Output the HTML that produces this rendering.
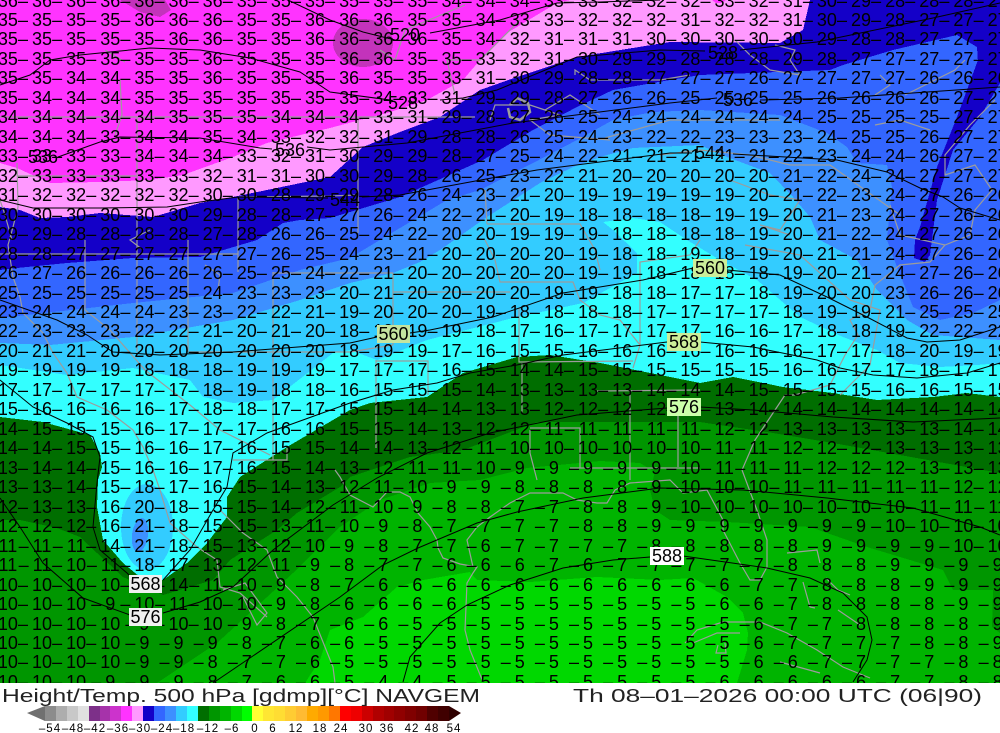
<!DOCTYPE html>
<html><head><meta charset="utf-8"><title>Height/Temp. 500 hPa NAVGEM</title>
<style>
html,body{margin:0;padding:0;background:#fff}
#w{position:relative;width:1000px;height:733px;overflow:hidden;font-family:"Liberation Sans",sans-serif;color:#000}
#m{position:absolute;left:0;top:0;width:1000px;height:683px;overflow:hidden}
svg{position:absolute;left:0;top:0}
table{position:absolute;left:-16.2px;top:-8.5px;border-collapse:separate;border-spacing:0;table-layout:fixed;width:1024px;font-size:18px;word-spacing:-1px}
td{padding:0;width:34.13px;height:19.47px;line-height:19.47px;text-align:center;white-space:nowrap}
tr{height:19.47px}
</style></head><body><div id="w"><div id="m">
<svg width="1000" height="683" viewBox="0 0 1000 683" shape-rendering="crispEdges">
<rect width="1000" height="683" fill="#ff33ff"/>
<polygon fill="#c333bb" points="120,0 165,0 171,10 160,17 140,12"/>
<ellipse fill="#c333bb" cx="363" cy="43" rx="30" ry="24"/>
<polygon fill="#ff99ff" points="0,163 17,168 50,183 100,182 150,180 183,175 233,157 267,143 330,128 360,120 387,113 427,100 463,80 480,60 507,33 557,3 570,0 1000,0 1000,683 0,683"/>
<polygon fill="#ff33ff" points="712,0 726,0 722,3 716,3"/>
<polygon fill="#1400c8" points="0,207 20,210 40,218 67,217 100,213 153,217 200,203 233,197 330,177 363,147 400,132 440,117 480,90 517,77 577,57 670,42 780,43 803,30 810,0 1000,0 1000,683 0,683"/>
<polygon fill="#3366ff" points="0,270 17,268 67,263 133,258 200,257 257,240 283,223 300,220 330,218 400,197 483,160 533,130 577,107 613,90 670,80 700,75 830,70 843,65 893,50 957,35 977,47 978,63 1000,83 1000,683 0,683"/>
<polygon fill="#1400c8" points="978,60 1000,60 1000,83 980,117 953,150 937,200 930,255 925,262 914,258 915,240 920,227 937,167 957,117"/>
<polygon fill="#3d90ff" points="0,318 133,303 233,293 300,270 350,258 400,228 447,200 480,190 533,163 577,140 613,120 653,112 700,110 780,115 827,133 847,147 857,163 887,165 892,187 887,240 897,267 913,307 940,320 973,313 1000,300 1000,683 0,683"/>
<polygon fill="#33ccff" points="0,343 50,345 133,337 233,320 300,300 350,283 393,273 420,262 440,250 487,217 540,183 573,167 600,157 633,148 700,145 727,157 770,173 793,197 810,217 820,240 857,260 877,290 907,320 933,335 1000,340 1000,683 0,683"/>
<polygon fill="#33ffff" points="0,365 67,375 133,368 190,380 203,397 233,403 273,400 333,353 350,350 377,360 427,340 513,318 583,303 637,273 637,253 613,230 603,222 633,218 660,222 687,240 720,260 757,280 800,317 843,337 877,350 900,363 940,367 977,365 1000,363 1000,683 0,683"/>
<ellipse fill="#33ccff" cx="147" cy="527" rx="26" ry="43"/>
<ellipse fill="#3d90ff" cx="140" cy="535" rx="8" ry="17" transform="rotate(8 140 535)"/>
<path fill="#006e00" fill-rule="evenodd" d="M0,417 43,422 90,435 100,453 102,467 98,480 97,507 103,540 123,563 140,577 163,580 187,563 207,543 227,517 227,497 240,477 287,447 350,410 370,403 427,397 463,373 517,357 550,355 600,363 700,383 733,377 783,387 833,393 877,400 933,397 967,393 1000,397 1000,683 0,683Z"/>
<polygon fill="#009600" points="0,520 20,520 57,528 80,537 97,553 123,577 163,595 213,580 230,560 277,530 297,513 340,487 350,477 410,457 463,450 537,422 700,422 733,427 773,433 833,443 1000,473 1000,683 0,683"/>
<polygon fill="#00b400" points="157,683 217,643 253,610 293,573 340,527 380,500 430,483 480,480 527,468 600,461 640,463 655,472 650,490 655,510 670,520 727,522 810,527 867,547 943,570 953,590 993,590 992,627 1000,633 1000,683"/>
<polygon fill="#00d800" points="305,683 320,660 330,630 363,617 397,587 423,580 470,572 477,580 530,582 597,577 660,580 693,578 727,597 743,613 748,633 747,650 737,683"/>
<g fill="none" stroke="#9c9c9c" stroke-width="1.2" shape-rendering="auto">
<polyline points="17,163 18,207 13,227 8,245 13,277 20,297 23,313 43,333 53,353 67,373 77,397 107,410 133,430 143,447 153,470 160,490 170,523 197,547 217,560 220,587 240,593 267,617"/>
<polyline points="220,510 243,533 267,550 277,577 297,597 313,617 333,667 335,683"/>
<polyline points="223,590 245,583 267,613 257,625 243,597"/>
<polyline points="0,117 475,117"/><polyline points="137,117 137,176 17,176"/>
<polyline points="137,176 137,240 137,352"/><polyline points="358,117 358,233"/><polyline points="238,197 330,196 358,195"/><polyline points="238,197 238,272"/>
<polyline points="85,240 85,310"/><polyline points="0,254 238,254"/><polyline points="188,240 188,352"/><polyline points="273,272 273,460"/><polyline points="273,273 393,273"/>
<polyline points="190,352 350,352 393,345"/><polyline points="233,460 287,460 287,448"/>
<polyline points="393,273 393,345 393,292 510,292"/><polyline points="519,308 519,362 633,361"/><polyline points="376,360 376,448"/><polyline points="376,361 428,361 428,395"/>
<polyline points="597,391 700,390"/><polyline points="630,393 630,480"/><polyline points="678,413 678,467"/><polyline points="530,428 580,428 580,468"/><polyline points="530,430 530,453 537,480"/><polyline points="522,363 522,413"/><polyline points="570,468 700,468"/>
<polyline points="85,310 110,330 145,370 190,405 220,430 270,455"/>
<polyline points="487,224 580,224 595,250 600,270"/><polyline points="485,190 487,224"/>
<polyline points="485,240 495,260 500,282 573,282 580,300 600,315 620,320 640,345 633,368"/>
<polyline points="700,240 690,255 640,262 640,345"/>
<polyline points="150,230 130,240 143,250"/><polyline points="205,265 220,275 218,290"/>
<polyline points="335,470 340,477 350,495 373,507 387,492 400,492 410,497 418,513 430,527 437,540 438,548 443,558 460,564 477,567 473,573 467,583 465,630 470,650 483,682"/>
<polyline points="473,567 467,540 477,527 490,517 510,503 530,493 563,493 577,500 597,503 607,503 615,490 630,483 670,480 683,493 707,490 723,520 723,530 740,563 750,580 760,580 767,567 767,540 758,513 742,470"/>
<polyline points="742,470 755,440 785,395 795,395 830,385 845,355 858,335 850,320 870,310 875,285 900,265 930,262 945,245"/>
<polyline points="685,643 697,630 723,622 760,622 787,633 817,650 843,667 870,678"/>
<polyline points="693,643 717,633 740,633"/><polyline points="718,645 716,653 726,653 725,643"/><polyline points="780,662 820,673"/>
<polyline points="787,553 817,550 820,563"/><polyline points="803,582 810,607 815,608"/><polyline points="826,578 838,590 850,595"/><polyline points="838,610 860,625"/>
<polyline points="520,20 480,60 447,60 455,95"/><polyline points="380,50 395,60 405,30 465,5"/><polyline points="490,120 495,105 530,105 560,115 530,120 550,135 610,140"/>
<polyline points="575,75 575,70 590,80 660,80 690,75"/><polyline points="545,110 570,95 600,115"/><polyline points="605,138 670,120 720,120 780,120"/>
<polyline points="660,155 700,150 750,155 790,165 830,165 900,215"/><polyline points="730,180 770,195 800,200 790,215 780,230 760,225 790,235"/>
<polyline points="735,40 750,55 770,70 800,75 790,60 795,50 775,45"/><polyline points="880,75 890,85 875,95"/><polyline points="875,125 900,120 930,130"/>
<polyline points="905,95 955,70 965,60"/><polyline points="995,100 970,125 945,155 945,175 975,165 992,190 975,210 970,235 945,245 900,235 890,205"/>
<polyline points="745,245 800,255 850,300 880,310 870,365 840,395"/>
<polyline points="0,200 5,215 12,240"/><polyline points="120,80 122,115 115,135"/><polyline points="105,50 125,62"/>
<polyline points="510,105 517,98 528,103 530,112 520,120 510,117 508,108" stroke-width="2.5"/>
</g>
<g fill="none" stroke="#000" stroke-width="1" shape-rendering="auto">
<polyline points="288,0 330,20 363,32 395,40"/><polyline points="430,33 500,20 557,3 600,2 660,0"/>
<polyline points="0,85 30,75 50,60 80,55 110,52 150,48 200,50 250,58 300,72 330,92 390,100"/><polyline points="440,100 463,98 497,90 577,57 660,50 705,51"/><polyline points="740,50 817,42 933,18 1000,3"/>
<polyline points="58,157 100,142 120,137 200,138 260,148 272,149"/><polyline points="307,147 330,150 363,147 407,143 513,123 670,103 717,98"/><polyline points="760,100 840,98 1000,87"/>
<polyline points="0,200 33,208 100,208 167,207 200,202 238,197 328,198"/><polyline points="362,197 400,195 497,177 537,170 670,153 692,153"/><polyline points="733,154 837,160 887,172 920,188 943,197 960,208 1000,220"/>
<polyline points="0,300 20,307 57,320 87,335 113,352 160,355 233,352 350,343 377,337"/><polyline points="410,333 430,330 493,317 563,293 643,280 693,268"/><polyline points="727,270 780,275 827,297 867,317 907,338 927,342 960,340 1000,327"/>
<polyline points="0,380 33,407 67,423 93,437 100,457 97,483 93,527 100,550 127,573 130,576"/><polyline points="163,580 190,550 213,510 227,487 233,453 267,433 350,403 393,390 437,383 470,373 517,365 563,355 667,342"/><polyline points="700,342 753,347 817,360 840,368 873,375 917,378 967,373 1000,363"/>
<polyline points="0,498 20,527 43,563 83,598 130,615"/><polyline points="163,613 200,602 233,587 273,550 333,505 377,478 427,453 490,433 577,415 667,408"/><polyline points="700,407 753,410 833,417 913,422 1000,418"/>
<polyline points="403,682 410,657 440,623 467,605 510,585 563,568 613,560 650,557"/><polyline points="683,556 767,568 810,578 843,593 867,617 872,640 867,660 853,682"/>
<polyline points="213,683 340,597 383,565 418,548 477,523 517,512 583,498 660,488 743,490 827,498 913,508 980,527 1000,535"/>
</g>
</svg>
<table>
<tr><td>– 36<td>– 36<td>– 36<td>– 36<td>– 36<td>– 36<td>– 36<td>– 35<td>– 35<td>– 35<td>– 35<td>– 35<td>– 35<td>– 34<td>– 34<td>– 34<td>– 33<td>– 33<td>– 32<td>– 32<td>– 32<td>– 33<td>– 32<td>– 31<td>– 30<td>– 29<td>– 28<td>– 28<td>– 28<td>– 27
<tr><td>– 35<td>– 35<td>– 35<td>– 35<td>– 36<td>– 36<td>– 36<td>– 35<td>– 35<td>– 36<td>– 36<td>– 36<td>– 35<td>– 35<td>– 34<td>– 33<td>– 33<td>– 32<td>– 32<td>– 32<td>– 31<td>– 32<td>– 32<td>– 31<td>– 30<td>– 29<td>– 28<td>– 27<td>– 27<td>– 27
<tr><td>– 35<td>– 35<td>– 35<td>– 35<td>– 35<td>– 36<td>– 36<td>– 35<td>– 35<td>– 36<td>– 36<td>– 36<td>– 36<td>– 35<td>– 34<td>– 32<td>– 31<td>– 31<td>– 31<td>– 30<td>– 30<td>– 30<td>– 30<td>– 30<td>– 29<td>– 28<td>– 28<td>– 27<td>– 27<td>– 27
<tr><td>– 35<td>– 35<td>– 35<td>– 35<td>– 35<td>– 35<td>– 36<td>– 35<td>– 35<td>– 35<td>– 36<td>– 36<td>– 35<td>– 35<td>– 33<td>– 32<td>– 31<td>– 30<td>– 29<td>– 29<td>– 28<td>– 28<td>– 28<td>– 29<td>– 28<td>– 27<td>– 27<td>– 27<td>– 27<td>– 27
<tr><td>– 35<td>– 35<td>– 34<td>– 34<td>– 35<td>– 35<td>– 36<td>– 35<td>– 35<td>– 35<td>– 36<td>– 35<td>– 35<td>– 33<td>– 31<td>– 30<td>– 29<td>– 28<td>– 28<td>– 27<td>– 27<td>– 27<td>– 26<td>– 27<td>– 27<td>– 27<td>– 27<td>– 26<td>– 26<td>– 26
<tr><td>– 35<td>– 34<td>– 34<td>– 34<td>– 35<td>– 35<td>– 35<td>– 35<td>– 35<td>– 35<td>– 35<td>– 34<td>– 33<td>– 31<td>– 29<td>– 29<td>– 28<td>– 27<td>– 26<td>– 26<td>– 25<td>– 25<td>– 25<td>– 25<td>– 26<td>– 26<td>– 26<td>– 26<td>– 27<td>– 27
<tr><td>– 34<td>– 34<td>– 34<td>– 34<td>– 34<td>– 35<td>– 35<td>– 35<td>– 34<td>– 34<td>– 34<td>– 33<td>– 31<td>– 29<td>– 28<td>– 27<td>– 26<td>– 25<td>– 24<td>– 24<td>– 24<td>– 24<td>– 24<td>– 24<td>– 25<td>– 25<td>– 25<td>– 25<td>– 27<td>– 27
<tr><td>– 34<td>– 34<td>– 34<td>– 33<td>– 34<td>– 34<td>– 35<td>– 34<td>– 33<td>– 32<td>– 32<td>– 31<td>– 29<td>– 28<td>– 28<td>– 26<td>– 25<td>– 24<td>– 23<td>– 22<td>– 22<td>– 23<td>– 23<td>– 23<td>– 24<td>– 25<td>– 25<td>– 26<td>– 27<td>– 27
<tr><td>– 33<td>– 33<td>– 33<td>– 33<td>– 34<td>– 34<td>– 34<td>– 33<td>– 32<td>– 31<td>– 30<td>– 29<td>– 29<td>– 28<td>– 27<td>– 25<td>– 24<td>– 22<td>– 21<td>– 21<td>– 21<td>– 21<td>– 21<td>– 22<td>– 23<td>– 24<td>– 24<td>– 26<td>– 27<td>– 27
<tr><td>– 32<td>– 33<td>– 33<td>– 33<td>– 33<td>– 33<td>– 32<td>– 31<td>– 31<td>– 30<td>– 30<td>– 29<td>– 28<td>– 26<td>– 25<td>– 23<td>– 22<td>– 21<td>– 20<td>– 20<td>– 20<td>– 20<td>– 20<td>– 21<td>– 22<td>– 24<td>– 24<td>– 27<td>– 27<td>– 27
<tr><td>– 31<td>– 32<td>– 32<td>– 32<td>– 32<td>– 32<td>– 30<td>– 30<td>– 28<td>– 29<td>– 29<td>– 28<td>– 26<td>– 24<td>– 23<td>– 21<td>– 20<td>– 19<td>– 19<td>– 19<td>– 19<td>– 19<td>– 20<td>– 21<td>– 22<td>– 23<td>– 24<td>– 27<td>– 26<td>– 26
<tr><td>– 30<td>– 30<td>– 30<td>– 30<td>– 30<td>– 30<td>– 29<td>– 28<td>– 28<td>– 27<td>– 27<td>– 26<td>– 24<td>– 22<td>– 21<td>– 20<td>– 19<td>– 18<td>– 18<td>– 18<td>– 18<td>– 19<td>– 19<td>– 20<td>– 21<td>– 23<td>– 24<td>– 27<td>– 26<td>– 26
<tr><td>– 29<td>– 29<td>– 28<td>– 28<td>– 28<td>– 28<td>– 27<td>– 28<td>– 26<td>– 26<td>– 25<td>– 24<td>– 22<td>– 20<td>– 20<td>– 19<td>– 19<td>– 19<td>– 18<td>– 18<td>– 18<td>– 18<td>– 19<td>– 20<td>– 21<td>– 22<td>– 24<td>– 27<td>– 26<td>– 26
<tr><td>– 28<td>– 28<td>– 27<td>– 27<td>– 27<td>– 27<td>– 27<td>– 27<td>– 26<td>– 25<td>– 24<td>– 23<td>– 21<td>– 20<td>– 20<td>– 20<td>– 20<td>– 19<td>– 18<td>– 18<td>– 19<td>– 18<td>– 19<td>– 20<td>– 21<td>– 21<td>– 24<td>– 27<td>– 26<td>– 26
<tr><td>– 26<td>– 27<td>– 26<td>– 26<td>– 26<td>– 26<td>– 26<td>– 25<td>– 25<td>– 24<td>– 22<td>– 21<td>– 20<td>– 20<td>– 20<td>– 20<td>– 20<td>– 19<td>– 19<td>– 18<td>– 18<td>– 18<td>– 18<td>– 19<td>– 20<td>– 21<td>– 24<td>– 27<td>– 26<td>– 26
<tr><td>– 25<td>– 25<td>– 25<td>– 25<td>– 25<td>– 25<td>– 24<td>– 23<td>– 23<td>– 23<td>– 20<td>– 21<td>– 20<td>– 20<td>– 20<td>– 20<td>– 19<td>– 19<td>– 18<td>– 18<td>– 17<td>– 17<td>– 18<td>– 19<td>– 20<td>– 20<td>– 23<td>– 26<td>– 26<td>– 26
<tr><td>– 23<td>– 24<td>– 24<td>– 24<td>– 24<td>– 23<td>– 23<td>– 22<td>– 22<td>– 21<td>– 19<td>– 20<td>– 20<td>– 20<td>– 19<td>– 18<td>– 18<td>– 18<td>– 18<td>– 17<td>– 17<td>– 17<td>– 17<td>– 18<td>– 19<td>– 19<td>– 21<td>– 25<td>– 25<td>– 25
<tr><td>– 22<td>– 23<td>– 23<td>– 23<td>– 22<td>– 22<td>– 21<td>– 20<td>– 21<td>– 20<td>– 18<td>– 19<td>– 19<td>– 19<td>– 18<td>– 17<td>– 16<td>– 17<td>– 17<td>– 17<td>– 17<td>– 16<td>– 16<td>– 17<td>– 18<td>– 18<td>– 19<td>– 22<td>– 22<td>– 22
<tr><td>– 20<td>– 21<td>– 21<td>– 20<td>– 20<td>– 20<td>– 20<td>– 20<td>– 20<td>– 20<td>– 18<td>– 19<td>– 19<td>– 17<td>– 16<td>– 15<td>– 15<td>– 16<td>– 16<td>– 16<td>– 16<td>– 16<td>– 16<td>– 16<td>– 17<td>– 17<td>– 18<td>– 20<td>– 19<td>– 19
<tr><td>– 19<td>– 19<td>– 19<td>– 19<td>– 18<td>– 18<td>– 18<td>– 19<td>– 19<td>– 19<td>– 17<td>– 17<td>– 17<td>– 16<td>– 15<td>– 14<td>– 14<td>– 15<td>– 15<td>– 15<td>– 15<td>– 15<td>– 15<td>– 16<td>– 16<td>– 17<td>– 17<td>– 18<td>– 17<td>– 17
<tr><td>– 17<td>– 17<td>– 17<td>– 17<td>– 17<td>– 17<td>– 18<td>– 19<td>– 18<td>– 18<td>– 16<td>– 15<td>– 15<td>– 15<td>– 14<td>– 13<td>– 13<td>– 13<td>– 13<td>– 14<td>– 14<td>– 14<td>– 15<td>– 15<td>– 15<td>– 15<td>– 16<td>– 16<td>– 15<td>– 15
<tr><td>– 15<td>– 16<td>– 16<td>– 16<td>– 16<td>– 17<td>– 18<td>– 18<td>– 17<td>– 17<td>– 15<td>– 15<td>– 14<td>– 14<td>– 13<td>– 13<td>– 12<td>– 12<td>– 12<td>– 12<td>– 12<td>– 13<td>– 14<td>– 14<td>– 14<td>– 14<td>– 14<td>– 14<td>– 14<td>– 14
<tr><td>– 14<td>– 15<td>– 15<td>– 15<td>– 16<td>– 17<td>– 17<td>– 17<td>– 16<td>– 16<td>– 15<td>– 15<td>– 14<td>– 13<td>– 12<td>– 12<td>– 11<td>– 11<td>– 11<td>– 11<td>– 11<td>– 12<td>– 12<td>– 13<td>– 13<td>– 13<td>– 13<td>– 13<td>– 14<td>– 14
<tr><td>– 14<td>– 14<td>– 15<td>– 15<td>– 16<td>– 16<td>– 17<td>– 16<td>– 15<td>– 15<td>– 14<td>– 14<td>– 13<td>– 12<td>– 11<td>– 10<td>– 10<td>– 10<td>– 10<td>– 10<td>– 10<td>– 11<td>– 11<td>– 12<td>– 12<td>– 12<td>– 13<td>– 13<td>– 13<td>– 13
<tr><td>– 13<td>– 14<td>– 14<td>– 15<td>– 16<td>– 16<td>– 17<td>– 16<td>– 15<td>– 14<td>– 13<td>– 12<td>– 11<td>– 11<td>– 10<td>– 9<td>– 9<td>– 9<td>– 9<td>– 9<td>– 10<td>– 11<td>– 11<td>– 11<td>– 12<td>– 12<td>– 12<td>– 13<td>– 13<td>– 13
<tr><td>– 13<td>– 13<td>– 14<td>– 15<td>– 18<td>– 17<td>– 16<td>– 15<td>– 14<td>– 13<td>– 12<td>– 11<td>– 10<td>– 9<td>– 9<td>– 8<td>– 8<td>– 8<td>– 8<td>– 9<td>– 10<td>– 10<td>– 10<td>– 11<td>– 11<td>– 11<td>– 11<td>– 11<td>– 12<td>– 12
<tr><td>– 12<td>– 13<td>– 13<td>– 16<td>– 20<td>– 18<td>– 15<td>– 15<td>– 14<td>– 12<td>– 11<td>– 10<td>– 9<td>– 8<td>– 8<td>– 7<td>– 7<td>– 8<td>– 8<td>– 9<td>– 10<td>– 10<td>– 10<td>– 10<td>– 10<td>– 10<td>– 10<td>– 11<td>– 11<td>– 11
<tr><td>– 12<td>– 12<td>– 12<td>– 16<td>– 21<td>– 18<td>– 15<td>– 15<td>– 13<td>– 11<td>– 10<td>– 9<td>– 8<td>– 7<td>– 7<td>– 7<td>– 7<td>– 8<td>– 8<td>– 9<td>– 9<td>– 9<td>– 9<td>– 9<td>– 9<td>– 9<td>– 10<td>– 10<td>– 10<td>– 10
<tr><td>– 11<td>– 11<td>– 11<td>– 14<td>– 21<td>– 18<td>– 15<td>– 13<td>– 12<td>– 10<td>– 9<td>– 8<td>– 7<td>– 7<td>– 6<td>– 7<td>– 7<td>– 7<td>– 7<td>– 8<td>– 8<td>– 8<td>– 8<td>– 8<td>– 9<td>– 9<td>– 9<td>– 9<td>– 10<td>– 10
<tr><td>– 11<td>– 11<td>– 10<td>– 11<td>– 18<td>– 17<td>– 13<td>– 12<td>– 11<td>– 9<td>– 8<td>– 7<td>– 7<td>– 6<td>– 6<td>– 6<td>– 7<td>– 6<td>– 7<td>– 7<td>– 7<td>– 7<td>– 7<td>– 8<td>– 8<td>– 8<td>– 9<td>– 9<td>– 9<td>– 9
<tr><td>– 10<td>– 10<td>– 10<td>– 10<td>– 12<td>– 14<td>– 11<td>– 10<td>– 9<td>– 8<td>– 7<td>– 6<td>– 6<td>– 6<td>– 6<td>– 6<td>– 6<td>– 6<td>– 6<td>– 6<td>– 6<td>– 6<td>– 7<td>– 7<td>– 8<td>– 8<td>– 8<td>– 9<td>– 9<td>– 9
<tr><td>– 10<td>– 10<td>– 10<td>– 9<td>– 10<td>– 11<td>– 10<td>– 10<td>– 9<td>– 8<td>– 6<td>– 6<td>– 6<td>– 6<td>– 5<td>– 5<td>– 5<td>– 5<td>– 5<td>– 5<td>– 5<td>– 6<td>– 6<td>– 7<td>– 8<td>– 8<td>– 8<td>– 8<td>– 9<td>– 9
<tr><td>– 10<td>– 10<td>– 10<td>– 10<td>– 9<td>– 10<td>– 10<td>– 9<td>– 8<td>– 7<td>– 6<td>– 6<td>– 5<td>– 5<td>– 5<td>– 5<td>– 5<td>– 5<td>– 5<td>– 5<td>– 5<td>– 5<td>– 6<td>– 7<td>– 7<td>– 8<td>– 8<td>– 8<td>– 8<td>– 9
<tr><td>– 10<td>– 10<td>– 10<td>– 10<td>– 9<td>– 9<td>– 9<td>– 8<td>– 7<td>– 6<td>– 6<td>– 5<td>– 5<td>– 5<td>– 5<td>– 5<td>– 5<td>– 5<td>– 5<td>– 5<td>– 5<td>– 5<td>– 6<td>– 7<td>– 7<td>– 7<td>– 7<td>– 8<td>– 8<td>– 9
<tr><td>– 10<td>– 10<td>– 10<td>– 10<td>– 9<td>– 9<td>– 8<td>– 7<td>– 7<td>– 6<td>– 5<td>– 5<td>– 5<td>– 5<td>– 5<td>– 5<td>– 5<td>– 5<td>– 5<td>– 5<td>– 5<td>– 5<td>– 6<td>– 6<td>– 7<td>– 7<td>– 7<td>– 7<td>– 8<td>– 8
<tr><td>– 10<td>– 10<td>– 10<td>– 9<td>– 9<td>– 9<td>– 8<td>– 7<td>– 6<td>– 6<td>– 5<td>– 4<td>– 4<td>– 5<td>– 5<td>– 5<td>– 5<td>– 5<td>– 5<td>– 5<td>– 5<td>– 6<td>– 6<td>– 6<td>– 6<td>– 6<td>– 7<td>– 7<td>– 8<td>– 8
</table>
<svg width="1000" height="683" viewBox="0 0 1000 683" font-family="Liberation Sans,sans-serif" font-size="18" text-anchor="middle">
<rect x="377" y="325" width="33" height="18" fill="#c4e4a0"/><rect x="693" y="259" width="34" height="18" fill="#ccee99"/><rect x="667" y="333" width="34" height="18" fill="#ccee99"/><rect x="667" y="398" width="34" height="18" fill="#ccffaa"/>
<rect x="129" y="575" width="33" height="18" fill="#f0f0f0"/><rect x="129" y="608" width="33" height="18" fill="#f0f0f0"/><rect x="650" y="547" width="34" height="18" fill="#fff"/>
<text x="405" y="41">520</text><text x="403" y="109">528</text><text x="723" y="59">528</text><text x="43" y="163">536</text><text x="290" y="156">536</text><text x="738" y="106">536</text><text x="345" y="206">544</text><text x="710" y="159">544</text>
<text x="393.5" y="340">560</text><text x="710" y="274">560</text><text x="684" y="348">568</text><text x="684" y="413">576</text><text x="145.5" y="590">568</text><text x="145.5" y="623">576</text><text x="667" y="562">588</text>
</svg>
</div>
<svg width="1000" height="733" viewBox="0 0 1000 733" font-family="Liberation Sans,sans-serif">
<text x="2" y="702" font-size="18" fill="#222" textLength="478" lengthAdjust="spacingAndGlyphs">Height/Temp. 500 hPa [gdmp][°C] NAVGEM</text>
<text x="573" y="702" font-size="18" fill="#222" textLength="409" lengthAdjust="spacingAndGlyphs">Th 08–01–2026 00:00 UTC (06|90)</text>
<polygon points="27,713 45,706 45,721" fill="#707070"/>
<g shape-rendering="crispEdges">
<rect x="45" y="706" width="11" height="15" fill="#8c8c8c"/><rect x="56" y="706" width="11" height="15" fill="#adadad"/><rect x="67" y="706" width="11" height="15" fill="#c8c8c8"/><rect x="78" y="706" width="11" height="15" fill="#e0e0e0"/>
<rect x="89" y="706" width="11" height="15" fill="#7d3089"/><rect x="100" y="706" width="11" height="15" fill="#a633aa"/><rect x="110" y="706" width="11" height="15" fill="#cc33cc"/><rect x="121" y="706" width="11" height="15" fill="#ff33ff"/><rect x="132" y="706" width="11" height="15" fill="#ff99ff"/>
<rect x="143" y="706" width="11" height="15" fill="#1400c8"/><rect x="154" y="706" width="11" height="15" fill="#3366ff"/><rect x="165" y="706" width="11" height="15" fill="#3d90ff"/><rect x="176" y="706" width="11" height="15" fill="#33ccff"/><rect x="187" y="706" width="11" height="15" fill="#33ffff"/>
<rect x="198" y="706" width="11" height="15" fill="#006e00"/><rect x="209" y="706" width="11" height="15" fill="#009600"/><rect x="220" y="706" width="11" height="15" fill="#00b400"/><rect x="231" y="706" width="11" height="15" fill="#00d800"/><rect x="242" y="706" width="11" height="15" fill="#00ff00"/>
<rect x="252" y="706" width="11" height="15" fill="#ffff33"/><rect x="263" y="706" width="11" height="15" fill="#ffe633"/><rect x="274" y="706" width="11" height="15" fill="#ffdd33"/><rect x="285" y="706" width="11" height="15" fill="#ffcc33"/><rect x="296" y="706" width="11" height="15" fill="#ffbb33"/><rect x="307" y="706" width="11" height="15" fill="#ffaa00"/><rect x="318" y="706" width="11" height="15" fill="#ff9900"/><rect x="329" y="706" width="11" height="15" fill="#ff7700"/>
<rect x="340" y="706" width="11" height="15" fill="#ff0000"/><rect x="351" y="706" width="11" height="15" fill="#ee0000"/><rect x="362" y="706" width="11" height="15" fill="#cc0000"/><rect x="373" y="706" width="11" height="15" fill="#b00000"/><rect x="384" y="706" width="11" height="15" fill="#a00000"/><rect x="394" y="706" width="11" height="15" fill="#900000"/><rect x="405" y="706" width="11" height="15" fill="#800000"/><rect x="416" y="706" width="11" height="15" fill="#700000"/><rect x="427" y="706" width="11" height="15" fill="#500000"/><rect x="438" y="706" width="11" height="15" fill="#400000"/>
</g>
<polygon points="449,706 461,713 449,721" fill="#300000"/>
<g font-size="11.5" text-anchor="middle" letter-spacing="1">
<text x="50" y="732">–54</text><text x="73" y="732">–48</text><text x="95" y="732">–42</text><text x="118" y="732">–36</text><text x="140" y="732">–30</text><text x="162" y="732">–24</text><text x="184" y="732">–18</text><text x="208" y="732">–12</text><text x="232" y="732">–6</text>
<text x="255" y="732">0</text><text x="273" y="732">6</text><text x="296" y="732">12</text><text x="320" y="732">18</text><text x="341" y="732">24</text><text x="366" y="732">30</text><text x="387" y="732">36</text><text x="412" y="732">42</text><text x="432" y="732">48</text><text x="454" y="732">54</text>
</g>
</svg>
</div></body></html>
